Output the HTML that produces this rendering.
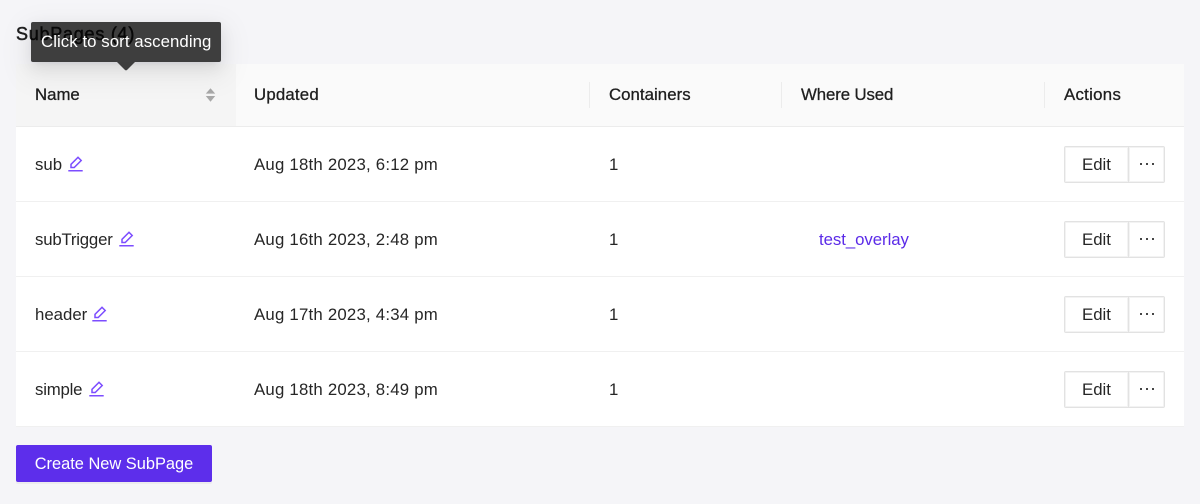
<!DOCTYPE html>
<html><head><meta charset="utf-8"><style>
html,body{margin:0;padding:0;width:1200px;height:504px;overflow:hidden;background:#f5f5f8;font-family:"Liberation Sans",sans-serif;color:#1f1f1f}
.a{position:absolute;white-space:nowrap}
.t{font-size:16.8px;line-height:20px;letter-spacing:.22px;color:#262626}
.h{font-size:16.8px;line-height:20px;font-weight:400;color:#1f1f1f;-webkit-text-stroke:.3px #1f1f1f;top:85px}
.line{position:absolute;left:16px;width:1168px;height:1px;background:#f0f0f0}
.sep{position:absolute;top:82px;width:1px;height:26px;background:#ececec}
.edit{position:absolute;box-sizing:border-box;left:1064px;width:65px;height:37px;background:#fff;border:1px solid #e2e2e2;box-shadow:inset 0 0 0 1px #f3f3f3;border-radius:2px 0 0 2px;font-size:16.8px;line-height:35px;text-align:center;color:#262626}
.more{position:absolute;box-sizing:border-box;left:1128px;width:37px;height:37px;background:#fff;border:1px solid #e2e2e2;box-shadow:inset 0 0 0 1px #f3f3f3;border-radius:0 2px 2px 0}
.more i{position:absolute;top:16px;width:2px;height:2px;border-radius:.5px;background:#3a3a3a}
svg.p{position:absolute;width:16px;height:16px}
</style></head><body>
<div class="a" style="left:16px;top:22px;font-size:18px;line-height:24px;-webkit-text-stroke:.5px #1f1f1f;letter-spacing:.75px;color:#1f1f1f">SubPages (4)</div>
<div class="a" style="left:16px;top:64px;width:1168px;height:363px;background:#fff"></div>
<div class="a" style="left:16px;top:64px;width:1168px;height:62px;background:#fafafa"></div>
<div class="a" style="left:16px;top:64px;width:220px;height:62px;background:#f5f5f5"></div>
<div class="line" style="top:126px;background:#ececec"></div>
<div class="line" style="top:201px"></div>
<div class="line" style="top:276px"></div>
<div class="line" style="top:351px"></div>
<div class="line" style="top:426px"></div>
<div class="sep" style="left:589px"></div><div class="sep" style="left:781px"></div><div class="sep" style="left:1044px"></div>
<div class="a h" style="left:35px;letter-spacing:0">Name</div>
<div class="a h" style="left:254px;letter-spacing:.2px">Updated</div>
<div class="a h" style="left:609px;letter-spacing:.05px">Containers</div>
<div class="a h" style="left:801px;letter-spacing:-.1px">Where Used</div>
<div class="a h" style="left:1064px;letter-spacing:.3px">Actions</div>
<svg class="a" style="left:205px;top:88px" width="11" height="15" viewBox="0 0 11 15"><path d="M5.5 0.2L10.2 5.6H0.8z" fill="#a8a8a8"/><path d="M5.5 13.8L10.2 8H0.8z" fill="#a8a8a8"/></svg>

<div class="a t" style="left:35px;top:155px;letter-spacing:0">sub</div>
<div class="a t" style="left:35px;top:230px;letter-spacing:-.2px">subTrigger</div>
<div class="a t" style="left:35px;top:305px;letter-spacing:0">header</div>
<div class="a t" style="left:35px;top:380px;letter-spacing:-.2px">simple</div>
<svg class="p" style="left:68px;top:156px" viewBox="0 0 16 16" fill="none" stroke="#7c4dff" stroke-width="1.5"><path d="M0.3 14.7H14.7M3 11.5V8.3L10 1.3L13.2 4.5L6.2 11.5Z"/></svg>
<svg class="p" style="left:119px;top:231px" viewBox="0 0 16 16" fill="none" stroke="#7c4dff" stroke-width="1.5"><path d="M0.3 14.7H14.7M3 11.5V8.3L10 1.3L13.2 4.5L6.2 11.5Z"/></svg>
<svg class="p" style="left:92px;top:306px" viewBox="0 0 16 16" fill="none" stroke="#7c4dff" stroke-width="1.5"><path d="M0.3 14.7H14.7M3 11.5V8.3L10 1.3L13.2 4.5L6.2 11.5Z"/></svg>
<svg class="p" style="left:89px;top:381px" viewBox="0 0 16 16" fill="none" stroke="#7c4dff" stroke-width="1.5"><path d="M0.3 14.7H14.7M3 11.5V8.3L10 1.3L13.2 4.5L6.2 11.5Z"/></svg>

<div class="a t" style="left:254px;top:155px">Aug 18th 2023, 6:12 pm</div>
<div class="a t" style="left:254px;top:230px">Aug 16th 2023, 2:48 pm</div>
<div class="a t" style="left:254px;top:305px">Aug 17th 2023, 4:34 pm</div>
<div class="a t" style="left:254px;top:380px">Aug 18th 2023, 8:49 pm</div>
<div class="a t" style="left:609px;top:155px">1</div>
<div class="a t" style="left:609px;top:230px">1</div>
<div class="a t" style="left:609px;top:305px">1</div>
<div class="a t" style="left:609px;top:380px">1</div>
<div class="a t" style="left:819px;top:230px;color:#5b2be8;letter-spacing:-.05px">test_overlay</div>

<div class="edit" style="top:146px">Edit</div><div class="more" style="top:146px"><i style="left:11px"></i><i style="left:17px"></i><i style="left:23px"></i></div>
<div class="edit" style="top:221px">Edit</div><div class="more" style="top:221px"><i style="left:11px"></i><i style="left:17px"></i><i style="left:23px"></i></div>
<div class="edit" style="top:296px">Edit</div><div class="more" style="top:296px"><i style="left:11px"></i><i style="left:17px"></i><i style="left:23px"></i></div>
<div class="edit" style="top:371px">Edit</div><div class="more" style="top:371px"><i style="left:11px"></i><i style="left:17px"></i><i style="left:23px"></i></div>

<div class="a" style="left:16px;top:445px;width:196px;height:37px;background:#5d2eeb;border-radius:2px;box-shadow:0 2px 0 rgba(0,0,0,.04);color:#fff;font-size:16.4px;line-height:38px;text-align:center">Create New SubPage</div>

<div class="a" style="left:31px;top:22px;width:190px;height:40px;background:rgba(0,0,0,.75);border-radius:2px;box-shadow:0 3px 6px -4px rgba(0,0,0,.12),0 6px 16px rgba(0,0,0,.08),0 9px 28px 8px rgba(0,0,0,.05)"></div>
<svg class="a" style="left:116px;top:62px" width="20" height="9" viewBox="0 0 20 9"><path d="M1 0H19L11 8Q10 8.8 9 8Z" fill="#3d3d3d"/></svg>
<div class="a" style="left:41px;top:32px;font-size:16.8px;line-height:20px;color:#fff;letter-spacing:.07px">Click to sort ascending</div>
</body></html>
